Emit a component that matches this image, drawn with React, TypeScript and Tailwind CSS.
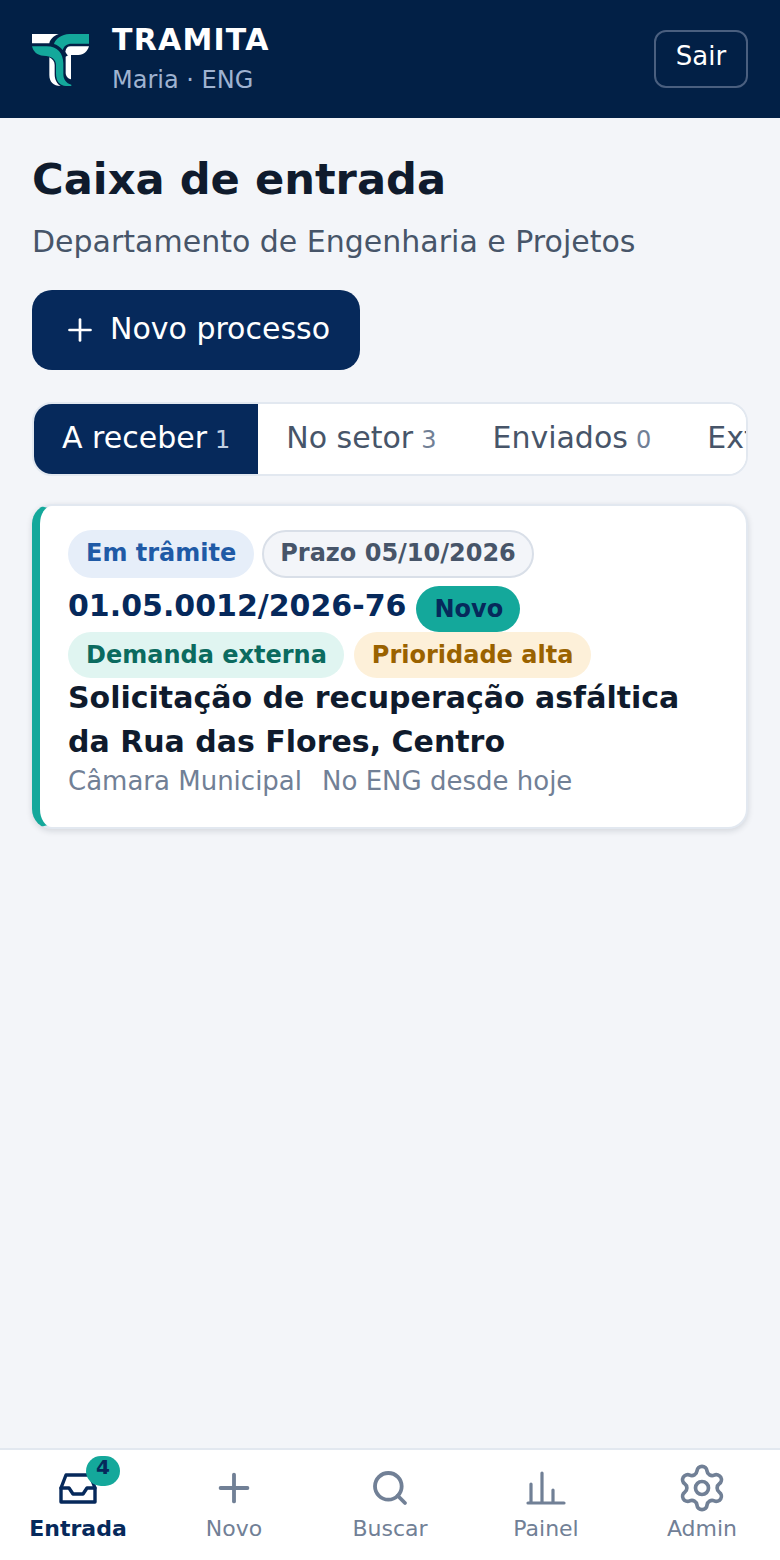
import { Plus, Search, Settings } from "lucide-react";

const font = { fontFamily: '"DejaVu Sans", sans-serif' };

function Logo() {
  return (
    <svg width="57" height="52" viewBox="96 102 171 156" className="mt-[2px] shrink-0">
      <path d="M96 102H176C160 108 150 118 148 130H96Z" fill="#fff" />
      <path d="M267 102H208C185 102 165 118 162 132C170 134 182 142 188 150C192 138 200 131 215 131H267Z" fill="#14a89b" />
      <path d="M96 139H140C172 139 190 160 190 190V222C190 238 198 250 214 254V258H198C180 258 168 245 168 220V195C168 178 155 167 130 167C112 167 100 155 96 139Z" fill="#14a89b" />
      <path d="M267 139H212C203 139 198 144 196 155C200 162 201 165 205 165H235C252 165 262 155 267 139Z" fill="#fff" />
      <path d="M197 170V218C197 228 204 236 213 238V165H205Z" fill="#fff" />
      <path d="M148 172V225C148 245 160 258 182 258C172 252 164 240 164 222V195C164 185 158 177 148 172Z" fill="#fff" />
    </svg>
  );
}

function Chip({ className, children }: { className: string; children: React.ReactNode }) {
  return (
    <span className={`inline-flex items-center rounded-full text-[24px] leading-none font-bold ${className}`}>
      {children}
    </span>
  );
}

function Tab({ label, count, active }: { label: string; count: number; active?: boolean }) {
  return (
    <div className={`flex h-full shrink-0 items-baseline gap-[8px] px-[28px] pt-[11px] text-[30px] ${active ? "bg-[#06295b] text-white" : "bg-white text-[#475569]"}`}>
      <span>{label}</span>
      <span className={`text-[24px] ${active ? "text-[#c3d0e2]" : "text-[#718096]"}`}>{count}</span>
    </div>
  );
}

function NavItem({ icon, label, active }: { icon: React.ReactNode; label: string; active?: boolean }) {
  return (
    <div className={`relative flex flex-1 flex-col items-center gap-[4px] ${active ? "text-[#06295b]" : "text-[#718096]"}`}>
      <div className="flex h-[44px] w-[44px] items-center justify-center">{icon}</div>
      <span className={`text-[22px] leading-[30px] ${active ? "font-bold" : ""}`}>{label}</span>
    </div>
  );
}

export default function App() {
  return (
    <div className="flex h-[1560px] w-[780px] flex-col overflow-hidden bg-[#f3f5f9]" style={font}>
      <header className="flex h-[118px] shrink-0 items-center justify-between bg-[#022046] px-[32px]">
        <div className="flex items-center gap-[23px]">
          <Logo />
          <div className="flex flex-col">
            <span className="text-[30px] leading-[40px] font-bold tracking-[1.2px] text-white">TRAMITA</span>
            <span className="pt-[1px] text-[24px] leading-[38px] text-[#9fb3d1]">Maria · ENG</span>
          </div>
        </div>
        <button type="button" className="h-[58px] w-[94px] rounded-[12px] border-2 border-[#4a5f7f] pb-[6px] text-[26px] text-white">
          Sair
        </button>
      </header>

      <main className="flex flex-1 flex-col px-[32px] pt-[32px]">
        <h1 className="text-[43.2px] leading-[58px] font-bold text-[#0f1b2d]">Caixa de entrada</h1>
        <p className="mt-[14px] text-[30px] leading-[40px] text-[#475569]">Departamento de Engenharia e Projetos</p>
        <button type="button" className="mt-[28px] flex h-[80px] w-[328px] items-center justify-center gap-[12px] rounded-[20px] bg-[#06295b] text-[30px] text-white">
          <Plus size={36} strokeWidth={1.8} />
          <span className="pb-[4px]">Novo processo</span>
        </button>

        <div className="mt-[32px] flex h-[74px] items-center overflow-hidden rounded-[20px] border-2 border-[#e2e8f0] bg-white">
          <Tab label="A receber" count={1} active />
          <Tab label="No setor" count={3} />
          <Tab label="Enviados" count={0} />
          <Tab label="Externos" count={0} />
        </div>

        <article className="mt-[28px] flex flex-col overflow-hidden rounded-[20px] border-2 border-l-[8px] border-[#e2e8f0] border-l-[#14a89b] bg-white pt-[24px] pr-[24px] pb-[29px] pl-[28px] shadow-[0_2px_6px_rgba(15,27,45,0.14)]">
          <div className="flex gap-[8px]">
            <Chip className="h-[48px] bg-[#e6eef9] px-[18px] pb-[2px] text-[#1f5aa6]">Em trâmite</Chip>
            <Chip className="h-[48px] border-2 border-[#d9dfe8] bg-[#f3f5f9] px-[16px] pb-[2px] text-[#475569]">Prazo 05/10/2026</Chip>
          </div>
          <div className="mt-[8px] flex items-start gap-[10px]">
            <span className="h-[46px] text-[30px] leading-[40px] font-bold text-[#06295b]">01.05.0012/2026-76</span>
            <Chip className="h-[46px] bg-[#14a89b] pr-[17px] pl-[18px] text-[#06295b]">Novo</Chip>
          </div>
          <div className="flex gap-[10px]">
            <Chip className="h-[46px] bg-[#e0f5f1] pr-[17px] pl-[18px] text-[#0b6b5f]">Demanda externa</Chip>
            <Chip className="h-[46px] bg-[#fdf0d9] px-[18px] text-[#9a6200]">Prioridade alta</Chip>
          </div>
          <h2 className="-mt-[2px] text-[30px] leading-[44px] font-bold text-[#0f1b2d]">
            Solicitação de recuperação asfáltica da Rua das Flores, Centro
          </h2>
          <div className="flex gap-[20px] text-[26px] leading-[34px] text-[#718096]">
            <span>Câmara Municipal</span>
            <span>No ENG desde hoje</span>
          </div>
        </article>
      </main>

      <nav className="flex h-[112px] shrink-0 items-start border-t-2 border-[#e2e8f0] bg-white pt-[16px]">
        <NavItem
          active
          label="Entrada"
          icon={
            <div className="relative">
              <svg width="38" height="31" viewBox="0 0 38 31" fill="none" stroke="currentColor" strokeWidth="3.4" strokeLinecap="round" strokeLinejoin="round" className="block">
                <path d="M2 15 7 2H31L36 15V29H2Z" />
                <path d="M2 15H10L14 21H24L28 15H36" />
              </svg>
              <span className="absolute -top-[17px] left-[27px] flex h-[30px] w-[34px] items-start justify-center rounded-full bg-[#14a89b] text-[20px] leading-[22px] font-bold text-[#06295b]">
                4
              </span>
            </div>
          }
        />
        <NavItem label="Novo" icon={<Plus size={46} strokeWidth={2} className="shrink-0" />} />
        <NavItem label="Buscar" icon={<Search size={40} strokeWidth={2.3} className="shrink-0" />} />
        <NavItem
          label="Painel"
          icon={
            <svg width="40" height="34" viewBox="0 0 40 34" fill="none" stroke="currentColor" strokeWidth="3.2" strokeLinecap="round">
              <path d="M2 32H38M5 32V13M16 32V2M27 32V19" />
            </svg>
          }
        />
        <NavItem label="Admin" icon={<Settings size={52} strokeWidth={1.7} className="shrink-0" />} />
      </nav>
    </div>
  );
}
